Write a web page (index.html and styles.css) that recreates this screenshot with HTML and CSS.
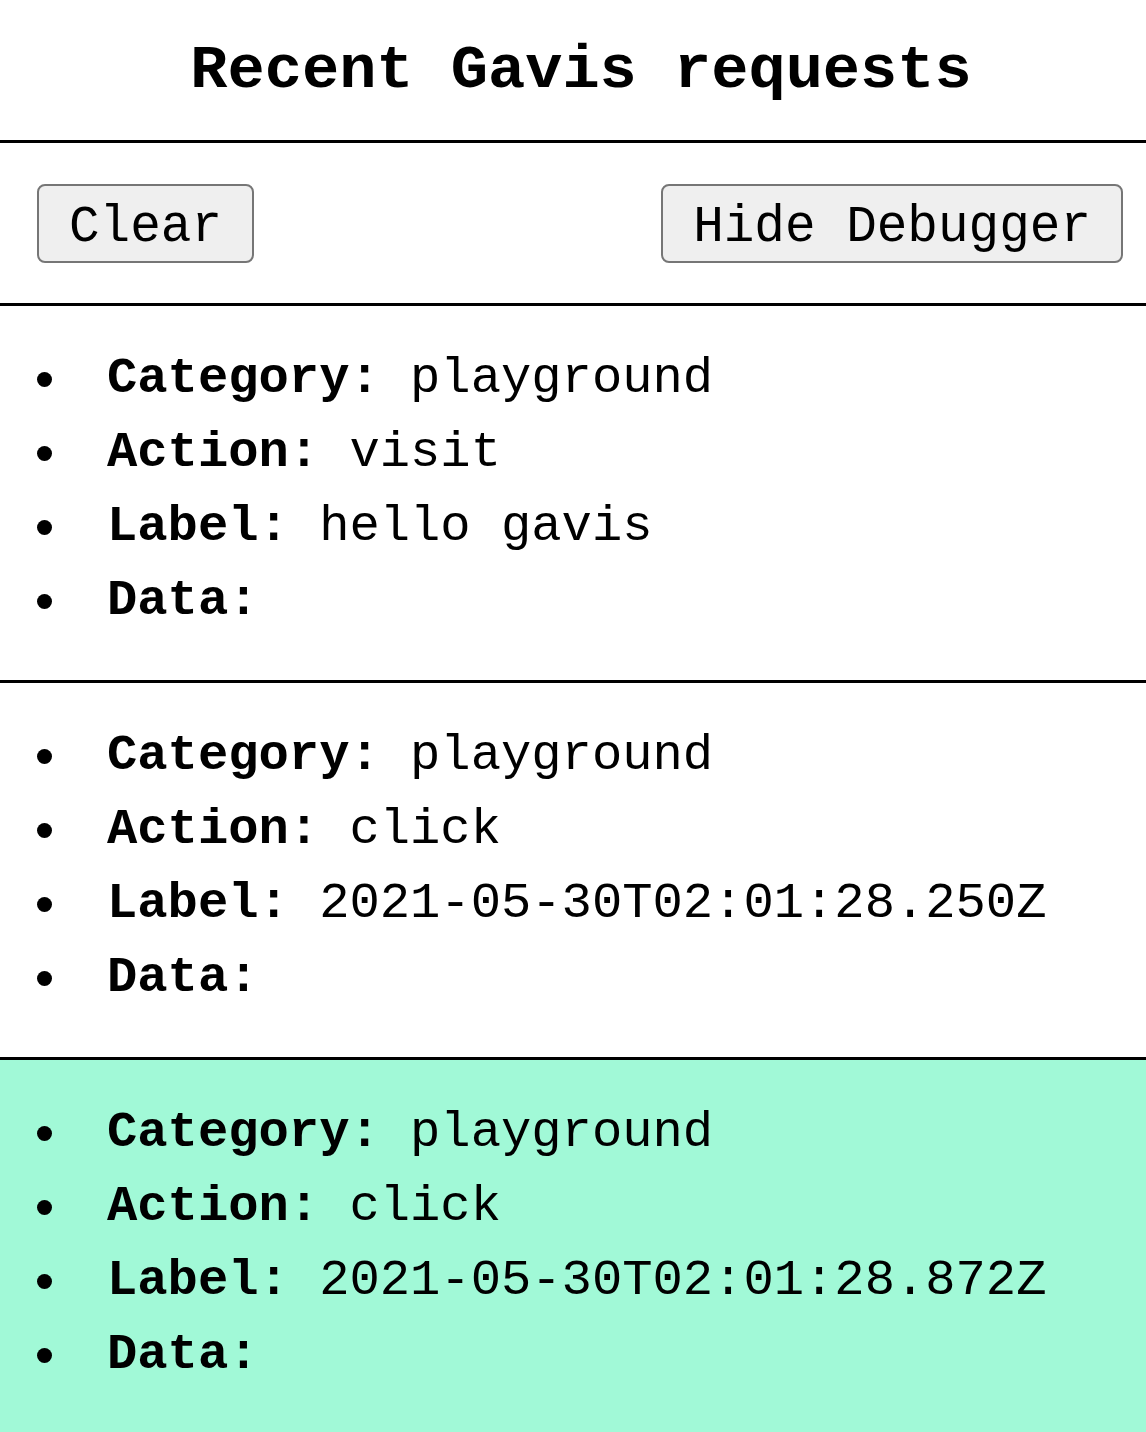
FILE: index.html
```html
<!DOCTYPE html>
<html>
<head>
<meta charset="utf-8">
<title>Recent Gavis requests</title>
<link rel="stylesheet" href="styles.css">
</head>
<body>
<div class="debugger">
  <header class="header">
    <h1 class="title">Recent Gavis requests</h1>
  </header>
  <div class="toolbar">
    <button class="btn" type="button">Clear</button>
    <button class="btn" type="button">Hide Debugger</button>
  </div>
  <section class="entry">
    <ul class="fields">
      <li class="field"><span class="text"><b class="key">Category:</b> playground</span></li>
      <li class="field"><span class="text"><b class="key">Action:</b> visit</span></li>
      <li class="field"><span class="text"><b class="key">Label:</b> hello gavis</span></li>
      <li class="field"><span class="text"><b class="key">Data:</b></span></li>
    </ul>
  </section>
  <section class="entry">
    <ul class="fields">
      <li class="field"><span class="text"><b class="key">Category:</b> playground</span></li>
      <li class="field"><span class="text"><b class="key">Action:</b> click</span></li>
      <li class="field"><span class="text"><b class="key">Label:</b> 2021-05-30T02:01:28.250Z</span></li>
      <li class="field"><span class="text"><b class="key">Data:</b></span></li>
    </ul>
  </section>
  <section class="entry entry-latest">
    <ul class="fields">
      <li class="field"><span class="text"><b class="key">Category:</b> playground</span></li>
      <li class="field"><span class="text"><b class="key">Action:</b> click</span></li>
      <li class="field"><span class="text"><b class="key">Label:</b> 2021-05-30T02:01:28.872Z</span></li>
      <li class="field"><span class="text"><b class="key">Data:</b></span></li>
    </ul>
  </section>
</div>
</body>
</html>
```
FILE: styles.css
```css
html, body {
  margin: 0;
  padding: 0;
  background: #ffffff;
}

body {
  font-family: "Liberation Mono", "Courier New", monospace;
  color: #000000;
  height: 1432px;
  overflow: hidden;
}

.debugger {
  display: flex;
  flex-direction: column;
  min-height: 1432px;
}

.header {
  height: 140px;
  display: flex;
  align-items: center;
  justify-content: center;
  padding-left: 16px;
  border-bottom: 3px solid #000;
}

.title {
  margin: 0;
  font-size: 62px;
  font-weight: bold;
  line-height: 1;
  padding-top: 2px;
}

.toolbar {
  display: flex;
  justify-content: space-between;
  align-items: center;
  height: 160px;
  padding: 0 23px 0 37px;
  border-bottom: 3px solid #000;
}

.btn {
  font-family: "Liberation Mono", "Courier New", monospace;
  font-size: 51px;
  height: 79px;
  padding: 8px 30px 0;
  color: #000;
  background: #efefef;
  border: 2px solid #767676;
  border-radius: 8px;
  line-height: 1;
}

.entry {
  border-bottom: 3px solid #000;
  padding: 36px 0 42px;
}

.entry-latest {
  border-bottom: none;
  background: #a1f9d7;
  flex: 1;
}

.fields {
  list-style: none;
  margin: 0;
  padding: 0;
}

.field {
  display: flex;
  align-items: center;
  font-size: 50.5px;
  line-height: 74px;
  height: 74px;
}

.field::before {
  content: "";
  width: 15px;
  height: 15px;
  border-radius: 50%;
  background: #000;
  margin: 0 55px 0 37px;
  flex: none;
}

.text {
  white-space: pre;
}

.key {
  font-weight: bold;
}
```
